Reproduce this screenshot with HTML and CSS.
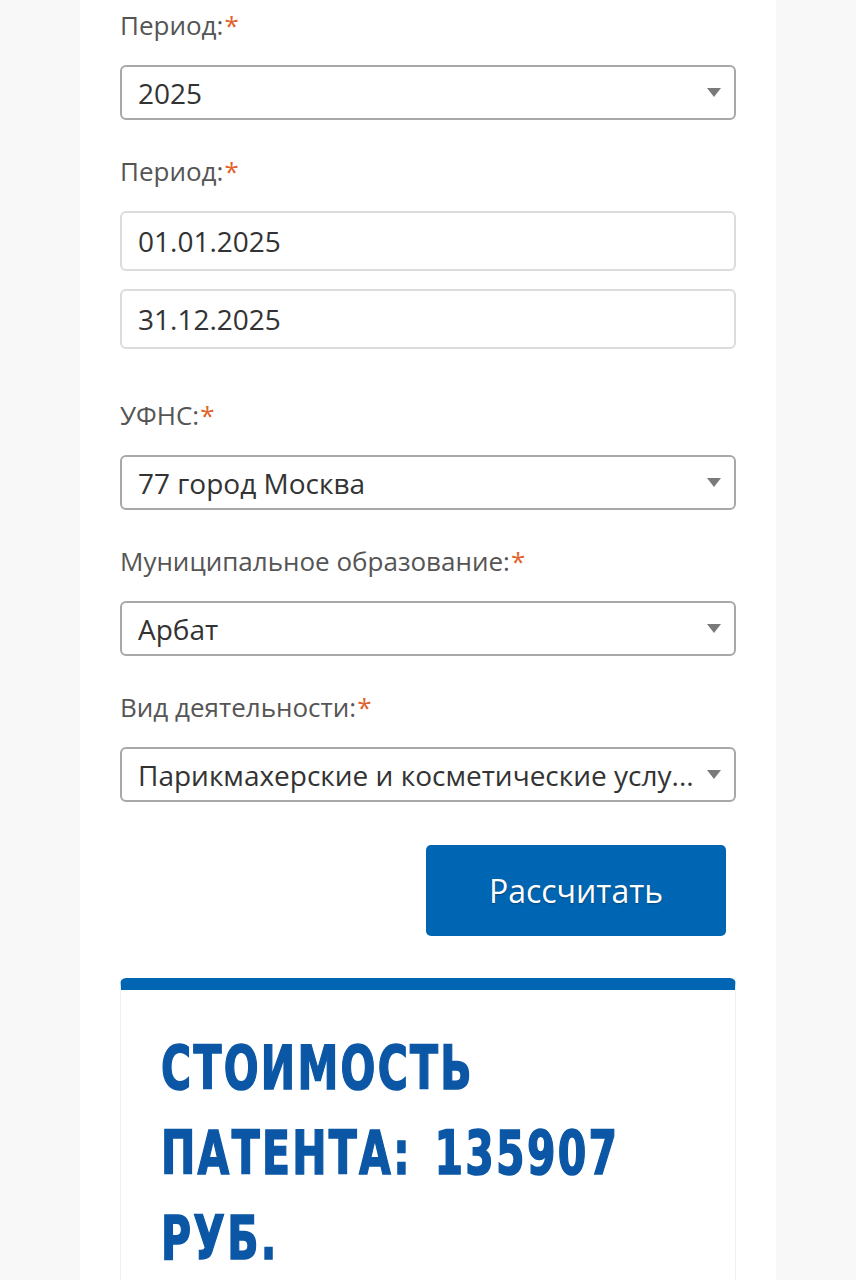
FILE: index.html
```html
<!DOCTYPE html>
<html lang="ru">
<head>
<meta charset="utf-8">
<title>Калькулятор патента</title>
<link rel="stylesheet" href="styles.css">
</head>
<body>
<div class="page">
  <main class="column">
    <form class="calc">
      <div class="group">
        <div class="label">Период:<span class="req">*</span></div>
        <div class="select"><span class="value">2025</span><svg class="arrow" width="14" height="9" viewBox="0 0 14 9"><path d="M0 0h14L7 9z" fill="#7a7a7a"/></svg></div>
      </div>
      <div class="group">
        <div class="label">Период:<span class="req">*</span></div>
        <div class="inputs">
          <div class="input">01.01.2025</div>
          <div class="input">31.12.2025</div>
        </div>
      </div>
      <div class="group group-wide">
        <div class="label">УФНС:<span class="req">*</span></div>
        <div class="select"><span class="value">77 город Москва</span><svg class="arrow" width="14" height="9" viewBox="0 0 14 9"><path d="M0 0h14L7 9z" fill="#7a7a7a"/></svg></div>
      </div>
      <div class="group">
        <div class="label">Муниципальное образование:<span class="req">*</span></div>
        <div class="select"><span class="value">Арбат</span><svg class="arrow" width="14" height="9" viewBox="0 0 14 9"><path d="M0 0h14L7 9z" fill="#7a7a7a"/></svg></div>
      </div>
      <div class="group">
        <div class="label">Вид деятельности:<span class="req">*</span></div>
        <div class="select"><span class="value">Парикмахерские и косметические услу...</span><svg class="arrow" width="14" height="9" viewBox="0 0 14 9"><path d="M0 0h14L7 9z" fill="#7a7a7a"/></svg></div>
      </div>
      <div class="actions">
        <button type="button" class="btn">Рассчитать</button>
      </div>
    </form>
    <section class="result">
      <h2 class="result-title">Стоимость патента: 135907 руб.</h2>
    </section>
  </main>
</div>
</body>
</html>
```

FILE: styles.css
```css
* { box-sizing: border-box; }
html, body { margin: 0; padding: 0; }
body {
  background: #f8f8f8;
  font-family: "Open Sans", "Liberation Sans", sans-serif;
  color: #333;
}
.page {
  display: flex;
  justify-content: flex-start;
  padding-left: 80px;
}
.column {
  width: 696px;
  background: #fff;
  padding: 6px 40px 0 40px;
  min-height: 1280px;
}
.calc {
  display: flex;
  flex-direction: column;
}
.group {
  display: flex;
  flex-direction: column;
  margin-bottom: 32px;
}
.group-wide { margin-top: 15px; }
.label {
  font-size: 26px;
  line-height: 39px;
  color: #555;
  margin-bottom: 20px;
}
.req {
  color: #e2622b;
  margin-left: 1px;
}
.select {
  display: flex;
  align-items: center;
  height: 55px;
  border: 2px solid #a8a8a8;
  border-radius: 6px;
  padding: 0 13px 0 16px;
  gap: 8px;
  background: #fff;
}
.value {
  flex: 1;
  min-width: 0;
  font-size: 28px;
  line-height: 40px;
  color: #333;
  white-space: nowrap;
  overflow: hidden;
}
.arrow { flex: none; }
.inputs {
  display: flex;
  flex-direction: column;
  gap: 18px;
}
.input {
  display: flex;
  align-items: center;
  height: 60px;
  border: 2px solid #dcdcdc;
  border-radius: 6px;
  padding: 0 16px;
  font-size: 28px;
  color: #333;
}
.actions {
  display: flex;
  justify-content: flex-end;
  padding-right: 10px;
  margin-top: 11px;
}
.btn {
  width: 300px;
  height: 91px;
  border: 0;
  border-radius: 5px;
  background: #0066b3;
  color: #fff;
  font-family: "Open Sans", "Liberation Sans", sans-serif;
  font-size: 32px;
  text-shadow: 0 1px 2px rgba(0, 0, 0, 0.35);
  cursor: pointer;
}
.result {
  margin-top: 42px;
  border: 1px solid #efefef;
  border-top: 12px solid #0066b3;
  border-radius: 6px 6px 0 0;
  padding: 36px 40px 20px 40px;
  min-height: 400px;
  overflow: hidden;
}
.result-title {
  margin: 0;
  width: 696px;
  transform: scaleX(0.76);
  transform-origin: left top;
  font-family: "DejaVu Sans", sans-serif;
  font-stretch: condensed;
  font-weight: 700;
  font-size: 60px;
  line-height: 85px;
  letter-spacing: 3px;
  word-spacing: 8px;
  text-transform: uppercase;
  color: #0b57a6;
  -webkit-text-stroke: 1.5px #0b57a6;
}
```
